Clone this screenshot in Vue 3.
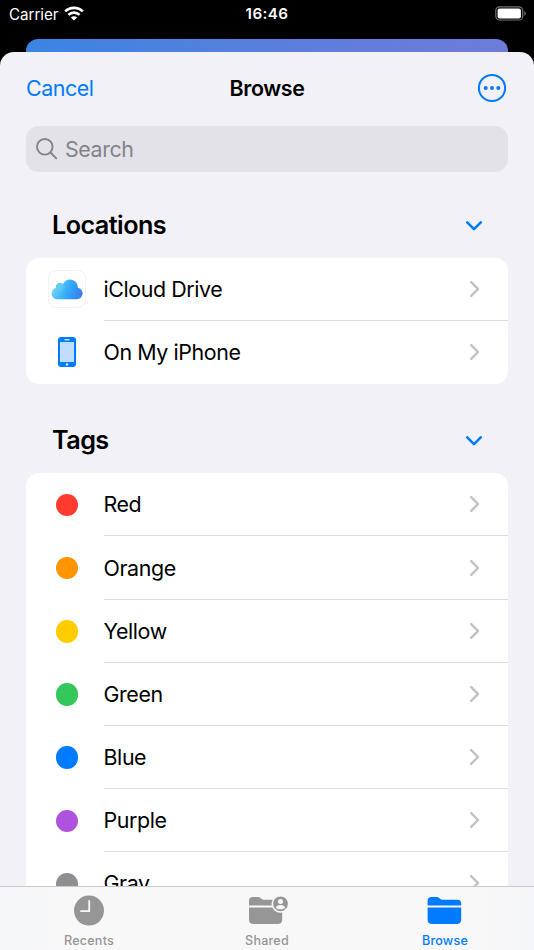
<template>
  <div class="screen">
    <header class="status-bar">
      <div class="carrier">
        <span class="carrier-name">Carrier</span>
        <svg class="wifi" viewBox="0 0 20 15">
          <path d="M1.2 5.4C6.1.6 13.9.6 18.8 5.4" />
          <path d="M4.4 8.9c3.1-3 8.1-3 11.2 0" />
          <path class="wifi-dot" d="M6.9 11.4c1.8-1.6 4.4-1.6 6.2 0L10 14.6z" />
        </svg>
      </div>
      <span class="time">16:46</span>
      <svg class="battery" viewBox="0 0 32 15">
        <rect class="battery-shell" x=".8" y=".8" width="26.9" height="13.2" rx="3.8" />
        <rect class="battery-level" x="2.6" y="2.5" width="23.3" height="9.9" rx="2" />
        <path class="battery-cap" d="M29.2 5.2c2 .7 2 3.8 0 4.5z" />
      </svg>
    </header>

    <div class="back-card" />

    <main class="sheet">
      <nav class="nav-bar">
        <span class="cancel">Cancel</span>
        <span class="nav-title">Browse</span>
        <svg class="more" viewBox="0 0 30 30">
          <circle class="more-ring" cx="15" cy="15" r="13.1" />
          <circle cx="8.7" cy="15" r="2" />
          <circle cx="15" cy="15" r="2" />
          <circle cx="21.3" cy="15" r="2" />
        </svg>
      </nav>

      <div class="search">
        <svg class="search-icon" viewBox="0 0 22 22">
          <circle cx="8.8" cy="8.8" r="7.8" />
          <path d="M14.5 14.5l5.8 5.8" />
        </svg>
        <span class="search-text">Search</span>
      </div>

      <section v-for="section in sections" :key="section.title" class="section">
        <div class="section-header">
          <h2 class="section-title">{{ section.title }}</h2>
          <svg class="chevron-down" viewBox="0 0 18 12">
            <path d="M2.2 2.3L9 9.1l6.8-6.8" />
          </svg>
        </div>
        <ul class="card">
          <li v-for="item in section.items" :key="item.name" class="row">
            <div class="row-icon">
              <div v-if="item.icon === 'cloud'" class="cloud-tile">
                <svg class="cloud" viewBox="0 0 32 21">
                  <defs>
                    <linearGradient id="cloud-fill" x1="0" y1=".4" x2="1" y2=".7">
                      <stop offset="0" stop-color="#7cd7f6" />
                      <stop offset=".5" stop-color="#36adf7" />
                      <stop offset=".8" stop-color="#3291f2" />
                      <stop offset="1" stop-color="#4277ea" />
                    </linearGradient>
                    <linearGradient id="cloud-puff" x1="0" y1="0" x2="1" y2="1">
                      <stop offset="0" stop-color="#63c7ef" />
                      <stop offset="1" stop-color="#6fd3fa" stop-opacity="0" />
                    </linearGradient>
                  </defs>
                  <path
                    fill="url(#cloud-fill)"
                    d="M6.5 20.2C2.9 20.2.6 17.6.6 14.4c0-3 1.7-5 4.2-5.5-.1-3 1.8-4.9 4.3-4.9 1.2 0 2.1.4 2.9 1C13.2 2.1 15.8.4 18.9.4c4.8 0 8 3.7 7.9 8.3 3 .6 4.8 2.8 4.8 5.6 0 3.4-2.6 5.9-5.9 5.9z"
                  />
                  <circle cx="9.2" cy="8.5" r="4.4" fill="url(#cloud-puff)" />
                </svg>
              </div>
              <svg v-else-if="item.icon === 'phone'" class="phone" viewBox="0 0 18 30">
                <rect x="0" y="0" width="18" height="30" rx="3.2" fill="#007aff" />
                <rect x="2" y="5" width="14" height="20" fill="#bfdeff" />
                <rect x="6.3" y="1.9" width="5.4" height="1.5" rx=".7" fill="#bfdeff" />
                <circle cx="9" cy="27.4" r="1.2" fill="#e5f2ff" />
              </svg>
              <span v-else class="dot" :class="item.color" />
            </div>
            <div class="row-body">
              <span class="row-label">{{ item.name }}</span>
              <svg class="chevron-right" viewBox="0 0 12 18">
                <path d="M2.2 2.2L9 9l-6.8 6.8" />
              </svg>
            </div>
          </li>
        </ul>
      </section>
    </main>

    <footer class="tab-bar">
      <div class="tab">
        <svg class="tab-icon" viewBox="0 0 40 32">
          <circle cx="20" cy="15.6" r="15" />
          <path class="clock-hands" d="M20.2 5.9v10.3H12" />
        </svg>
        <span class="tab-label">Recents</span>
      </div>
      <div class="tab">
        <svg class="tab-icon" viewBox="0 0 40 32">
          <path d="M2 10.5V6c0-2.7 1.3-4 4-4h4.7c1.2 0 2 .3 2.9 1.1l1.2 1c.7.5 1.2.7 2.2.7h14.6c2.4 0 3.6 1.3 3.6 3.8v1.9z" />
          <path d="M2 12.5h33.2v12.3c0 2.7-1.3 4.1-4 4.1H6c-2.7 0-4-1.4-4-4.1z" />
          <circle class="badge-ring" cx="33.5" cy="8.8" r="8.2" />
          <circle class="badge-person" cx="33.5" cy="6.6" r="2.5" />
          <path class="badge-person" d="M28.8 12.9c.5-1.9 2.3-2.8 4.7-2.8s4.2.9 4.7 2.8c-2.5 1.7-6.9 1.7-9.4 0z" />
        </svg>
        <span class="tab-label">Shared</span>
      </div>
      <div class="tab active">
        <svg class="tab-icon" viewBox="0 0 40 32">
          <path d="M2.6 10.5V6c0-2.7 1.3-4 4-4h4.7c1.2 0 2 .3 2.9 1.1l1.2 1c.7.5 1.2.7 2.2.7h15c2.4 0 3.6 1.3 3.6 3.8v1.9z" />
          <path d="M2.6 12.5h33.6v12.3c0 2.7-1.3 4.1-4 4.1H6.6c-2.7 0-4-1.4-4-4.1z" />
        </svg>
        <span class="tab-label">Browse</span>
      </div>
    </footer>
  </div>
</template>

<script setup>
const sections = [
  {
    title: 'Locations',
    items: [
      { name: 'iCloud Drive', icon: 'cloud' },
      { name: 'On My iPhone', icon: 'phone' }
    ]
  },
  {
    title: 'Tags',
    items: [
      { name: 'Red', color: 'red' },
      { name: 'Orange', color: 'orange' },
      { name: 'Yellow', color: 'yellow' },
      { name: 'Green', color: 'green' },
      { name: 'Blue', color: 'blue' },
      { name: 'Purple', color: 'purple' },
      { name: 'Gray', color: 'gray' }
    ]
  }
]
</script>

<style>
body {
  margin: 0;
  background: #000;
}
</style>

<style scoped>
.screen {
  display: flex;
  flex-direction: column;
  width: 534px;
  height: 950px;
  overflow: hidden;
  background: #000;
  color: #000;
  font-family: Inter, 'Liberation Sans', sans-serif;
  font-size: 21.4px;
}

.status-bar {
  display: grid;
  grid-template-columns: 1fr auto 1fr;
  align-items: center;
  flex: none;
  height: 27px;
  padding: 0 7px 12px 9px;
  color: #fff;
  font-size: 15.2px;
}

.carrier {
  display: flex;
  align-items: center;
  gap: 6px;
}

.carrier-name {
  position: relative;
  top: 0.5px;
  letter-spacing: -0.05px;
}

.wifi {
  width: 20px;
  height: 15px;
  margin-top: -1px;
  fill: none;
  stroke: #fff;
  stroke-width: 2.7;
}

.wifi-dot {
  fill: #fff;
  stroke: none;
}

.time {
  margin-left: -2px;
  font-weight: 600;
  letter-spacing: 0.4px;
}

.battery {
  width: 32px;
  height: 15px;
  justify-self: end;
}

.battery-shell {
  fill: none;
  stroke: #737373;
  stroke-width: 1.2;
}

.battery-level {
  fill: #fff;
}

.battery-cap {
  fill: #737373;
}

.back-card {
  flex: none;
  height: 13px;
  margin: 0 26px;
  border-radius: 12px 12px 0 0;
  background: linear-gradient(100deg, #3a85e2, #5c7edd 55%, #6f7bd9);
}

.sheet {
  flex: 1;
  min-height: 0;
  overflow: hidden;
  padding: 0 26px;
  border-radius: 14px 14px 0 0;
  background: #f2f1f7;
}

.nav-bar {
  display: grid;
  grid-template-columns: 1fr auto 1fr;
  align-items: center;
  box-sizing: border-box;
  height: 73.5px;
  padding-bottom: 1.5px;
}

.cancel {
  color: #007aff;
  letter-spacing: -0.45px;
}

.nav-title {
  font-weight: 600;
  letter-spacing: -0.4px;
}

.more {
  width: 30px;
  height: 30px;
  margin-right: 1.5px;
  justify-self: end;
  fill: #007aff;
}

.more-ring {
  fill: none;
  stroke: #007aff;
  stroke-width: 2;
}

.search {
  display: flex;
  align-items: center;
  gap: 7px;
  height: 46px;
  padding-left: 10px;
  border-radius: 13px;
  background: #e3e2e8;
  color: #838388;
}

.search-icon {
  width: 22px;
  height: 22px;
  fill: none;
  stroke: #838388;
  stroke-width: 1.9;
  stroke-linecap: round;
}

.search-text {
  letter-spacing: -0.4px;
}

.section-header {
  display: flex;
  align-items: center;
  justify-content: space-between;
  height: 64px;
  padding: 22px 25.5px 0 26px;
}

.section + .section .section-header {
  height: 65px;
  padding-top: 24.4px;
}

.section-title {
  margin: 0;
  padding-bottom: 2px;
  font-size: 25.2px;
  font-weight: 600;
  letter-spacing: -0.55px;
}

.chevron-down {
  width: 18px;
  height: 12px;
  fill: none;
  stroke: #007aff;
  stroke-width: 2.6;
  stroke-linecap: round;
  stroke-linejoin: round;
}

.card {
  margin: 0;
  padding: 0;
  border-radius: 13px;
  background: #fff;
  list-style: none;
}

.row {
  display: flex;
  height: 63.2px;
}

.row-icon {
  display: flex;
  align-items: center;
  justify-content: center;
  width: 82px;
  margin-right: -4.5px;
}

.row-body {
  display: flex;
  align-items: center;
  justify-content: space-between;
  flex: 1;
  padding-right: 27.5px;
  border-bottom: 1px solid #dddde0;
}

.row:last-child .row-body {
  border-bottom-color: transparent;
}

.row-label {
  white-space: nowrap;
  letter-spacing: -0.4px;
}

.chevron-right {
  width: 12px;
  height: 18px;
  fill: none;
  stroke: #c4c4c6;
  stroke-width: 2.5;
  stroke-linecap: round;
  stroke-linejoin: round;
}

.cloud-tile {
  display: flex;
  align-items: center;
  justify-content: center;
  box-sizing: border-box;
  width: 38px;
  height: 38px;
  border: 1px solid #f2f2f2;
  border-radius: 8px;
}

.cloud {
  width: 32px;
  height: 21px;
}

.phone {
  width: 18px;
  height: 30px;
}

.dot {
  width: 22.6px;
  height: 22.6px;
  border-radius: 50%;
}

.dot.red {
  background: #ff3b30;
}

.dot.orange {
  background: #ff9500;
}

.dot.yellow {
  background: #ffcc00;
}

.dot.green {
  background: #34c759;
}

.dot.blue {
  background: #007aff;
}

.dot.purple {
  background: #af52de;
}

.dot.gray {
  background: #8e8e93;
}

.tab-bar {
  display: grid;
  grid-template-columns: repeat(3, 1fr);
  flex: none;
  box-sizing: border-box;
  height: 64px;
  border-top: 1px solid #c9c9cb;
  background: linear-gradient(90deg, #f6f7fa, #f8f8f8 18%, #f8f8f8 88%, #f5f6f9);
  color: #969696;
  fill: #969696;
}

.tab {
  display: flex;
  flex-direction: column;
  align-items: center;
  padding-top: 8px;
}

.tab.active {
  color: #007aff;
  fill: #007aff;
}

.tab-icon {
  width: 40px;
  height: 32px;
  overflow: visible;
}

.clock-hands {
  fill: none;
  stroke: #f8f8f8;
  stroke-width: 1.8;
  stroke-linecap: round;
  stroke-linejoin: round;
}

.badge-ring {
  stroke: #f8f8f8;
  stroke-width: 1.6;
}

.badge-person {
  fill: #f8f8f8;
}

.tab-label {
  margin-top: 5.5px;
  font-size: 12.6px;
  font-weight: 500;
  line-height: 16px;
  letter-spacing: 0.2px;
}
</style>
